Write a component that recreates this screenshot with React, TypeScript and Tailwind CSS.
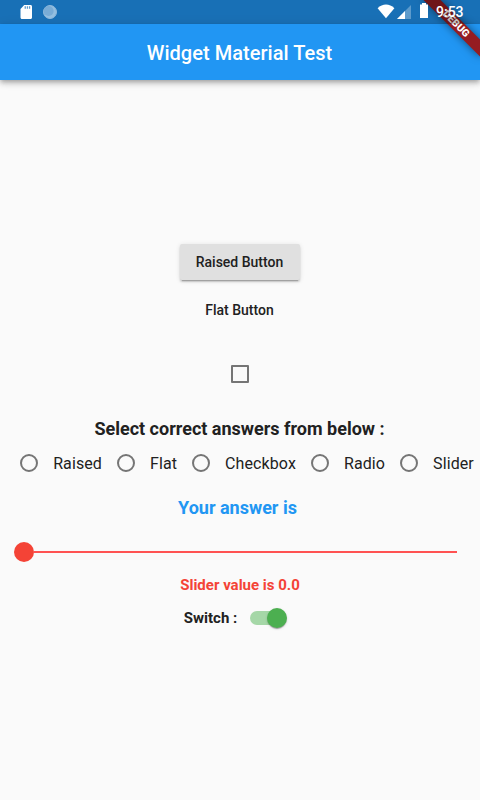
import React from "react";

function StatusBar() {
  return (
    <div className="h-6 shrink-0 bg-[#2196f3]">
      <div className="relative z-20 flex h-6 items-start justify-between bg-black/25">
        <svg width="70" height="24" viewBox="0 0 70 24">
          <path
            d="M24.200 5h6.300c.9 0 1.500.6 1.500 1.500v11c0 .9-.6 1.500-1.500 1.500h-8.500c-.9 0-1.500-.6-1.500-1.500V9z"
            fill="#fff"
          />
          <path d="M24.600 6.200h1.300v2.600h-1.300zM26.800 6.200h1.300v2.600h-1.300zM29 6.200h1.200v2.600H29z" fill="#5c9acd" />
          <circle cx="50" cy="12" r="6.500" fill="#94bfe0" stroke="#8fb9dc" strokeWidth="1" />
          <circle cx="48.600" cy="11" r="5" fill="#79acd6" />
        </svg>
        <svg width="110" height="24" viewBox="370 0 110 24">
          <path d="M377.600 8.200C382.500 3.400 389.500 3.400 394.400 8.200L386 18.300z" fill="#fff" />
          <path d="M411 5v14h-14z" fill="#fff" fillOpacity=".3" />
          <path d="M405 11v8h-8z" fill="#fff" />
          <path d="M420 4.600h2V3h4v1.600h2V18h-8z" fill="#fff" />
          <text x="436" y="17" fill="#fff" fontSize="14" fontWeight="500" fontFamily="Roboto, sans-serif">
            9:53
          </text>
        </svg>
      </div>
    </div>
  );
}

function DebugBanner() {
  return (
    <div className="pointer-events-none absolute top-0 right-0 z-10 size-20">
      <div className="absolute top-[18px] left-4 h-3 w-20 rotate-45 bg-[#951c21] text-center text-[10.2px] leading-3 font-black text-white shadow-[0_0_8px_rgba(0,0,0,0.5)]">
        DEBUG
      </div>
    </div>
  );
}

function RadioOption({ label }: { label: string }) {
  return (
    <label className="flex shrink-0 items-center">
      <span className="flex size-12 items-center justify-center">
        <svg width="20" height="20" viewBox="0 0 20 20" className="mb-0.5">
          <circle cx="10" cy="10" r="8" fill="none" stroke="#757575" strokeWidth="2" />
        </svg>
      </span>
      <span className="text-base tracking-[0.1px] text-[#212121]">{label}</span>
    </label>
  );
}

export default function App() {
  return (
    <div className="relative flex h-[800px] w-[480px] flex-col overflow-hidden bg-[#fafafa] font-[Roboto,sans-serif] text-[#212121]">
      <StatusBar />
      <DebugBanner />
      <header className="flex h-14 shrink-0 items-center justify-center bg-[#2196f3] pt-0.5 text-xl font-medium text-white shadow-[0_2px_4px_-1px_rgba(0,0,0,0.2),0_4px_5px_rgba(0,0,0,0.14),0_1px_10px_rgba(0,0,0,0.12)]">
        <span className="mr-px tracking-[0.03px]">Widget Material Test</span>
      </header>
      <main className="flex flex-col items-center pt-[164px]">
        <button className="h-9 w-[120px] rounded-[2px] bg-[#e0e0e0] pr-px text-sm font-medium shadow-[0_3px_1px_-2px_rgba(0,0,0,0.2),0_2px_2px_rgba(0,0,0,0.14),0_1px_5px_rgba(0,0,0,0.12)]">
          Raised Button
        </button>
        <button className="mt-3 mr-px h-9 text-sm font-medium">Flat Button</button>
        <span className="mt-[37px] size-[18px] rounded-[1px] border-2 border-[#757575]" />
        <h2 className="mt-[35px] mr-px text-lg leading-[21px] font-bold">Select correct answers from below :</h2>
        <div className="mr-px flex h-[50px] items-center justify-center">
          {["Raised", "Flat", "Checkbox", "Radio", "Slider"].map((label) => (
            <RadioOption key={label} label={label} />
          ))}
        </div>
        <p className="mt-2 mr-[5px] text-lg leading-[21px] font-bold text-[#2196f3]">Your answer is</p>
        <div className="mt-6 flex h-5 w-full items-center pr-[23px] pl-3.5">
          <span className="size-5 rounded-full bg-[#f44336]" />
          <span className="h-0.5 flex-1 bg-[#ff5252]" />
        </div>
        <p className="mt-[14px] text-[15px] leading-[18px] font-bold text-[#f44336]">Slider value is 0.0</p>
        <div className="mt-3.5 mr-[13px] flex h-5 items-center">
          <span className="text-[15px] leading-[18px] font-bold">Switch :</span>
          <span className="ml-[13px] flex h-3.5 w-[33px] items-center justify-end rounded-full bg-[#a5d7a7]">
            <span className="-mr-[4px] size-5 shrink-0 rounded-full bg-[#4caf50] shadow-[0_2px_1px_-1px_rgba(0,0,0,0.2),0_1px_1px_rgba(0,0,0,0.14),0_1px_3px_rgba(0,0,0,0.12)]" />
          </span>
        </div>
      </main>
    </div>
  );
}
